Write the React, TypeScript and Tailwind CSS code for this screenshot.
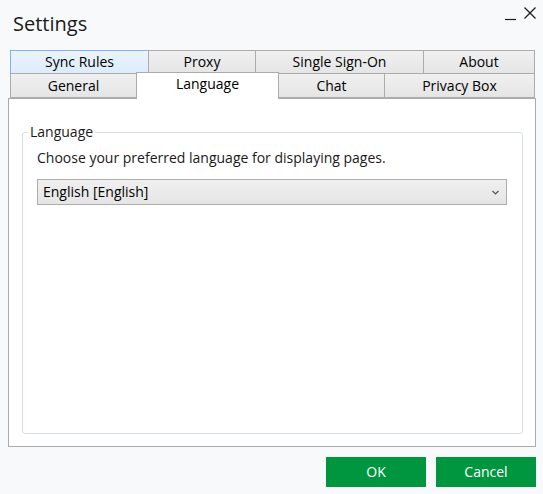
import React from "react";

const tabBase =
  "flex items-center justify-center border border-[#acacac] bg-linear-to-b from-[#f0f0f0] to-[#e5e5e5] text-[14px] leading-[20px] text-[#000]";

export default function App() {
  return (
    <div className="w-[543px] h-[494px] bg-[#f8f9fb] font-['Open_Sans','Noto_Sans',sans-serif] text-[#000] flex flex-col">
      {/* Title bar */}
      <div className="h-[50px] flex justify-between items-start">
        <div className="pl-[13px] pt-[10px] text-[20px] leading-[28px] text-[#1a1a1a]">Settings</div>
        <svg width="40" height="30" viewBox="0 0 40 30" className="mr-[3px]">
          <line x1="5" y1="19.5" x2="16" y2="19.5" stroke="#1e1e1e" strokeWidth="1.2" />
          <line x1="24.5" y1="7.5" x2="35.5" y2="18.5" stroke="#1e1e1e" strokeWidth="1.3" />
          <line x1="35.5" y1="7.5" x2="24.5" y2="18.5" stroke="#1e1e1e" strokeWidth="1.3" />
        </svg>
      </div>

      {/* Tab row 1 */}
      <div className="flex ml-[10px]">
        <div className="flex items-center justify-center border border-[#7eb4ea] bg-linear-to-b from-[#ecf4fc] to-[#dcecfc] text-[14px] leading-[20px] w-[139px] h-[24px]">
          Sync Rules
        </div>
        <div className={`${tabBase} -ml-px w-[108px] h-[24px]`}>Proxy</div>
        <div className={`${tabBase} -ml-px w-[169px] h-[24px]`}>Single Sign-On</div>
        <div className={`${tabBase} -ml-px w-[112px] h-[24px]`}>About</div>
      </div>

      {/* Tab row 2 */}
      <div className="flex items-start ml-[10px] -mt-px relative z-10">
        <div className={`${tabBase} w-[127px] h-[25px]`}>General</div>
        <div className="-ml-px -mt-px w-[143px] h-[27px] flex items-start justify-center pt-[1px] border border-b-0 border-[#acacac] bg-white text-[14px] leading-[20px]">
          Language
        </div>
        <div className={`${tabBase} -ml-px w-[107px] h-[25px]`}>Chat</div>
        <div className={`${tabBase} -ml-px w-[151px] h-[25px]`}>Privacy Box</div>
      </div>

      {/* Panel */}
      <div className="ml-[8px] w-[528px] h-[349px] -mt-px border border-[#acacac] bg-white flex flex-col pl-[13px] pr-[12px] pt-[23px] pb-[12px]">
        <fieldset className="flex-1 border border-[#d5dfe5] rounded-[3px] px-0">
          <legend className="ml-[5px] px-[2px] text-[14px] leading-[20px] text-[#1a1a1a]">Language</legend>
          <div className="pl-[14px] pr-[15px] pt-[6px]">
            <div className="text-[14px] leading-[20px] text-[#1a1a1a]">
              Choose your preferred language for displaying pages.
            </div>
            <div className="mt-[11px] h-[26px] border border-[#acacac] bg-linear-to-b from-[#f0f0f0] to-[#e5e5e5] flex items-center justify-between pl-[5px] pr-[6px] text-[14px] leading-[20px]">
              <span>English [English]</span>
              <svg width="7" height="5" viewBox="0 0 7 5" className="mr-[1px]">
                <path d="M0.5 1 L3.5 4 L6.5 1" fill="none" stroke="#555" strokeWidth="1.2" />
              </svg>
            </div>
          </div>
        </fieldset>
      </div>

      {/* Buttons */}
      <div className="flex justify-end gap-[10px] mt-[10px] mr-[7px]">
        <button className="w-[100px] h-[30px] bg-[#00963f] text-white text-[14px] leading-[20px]">OK</button>
        <button className="w-[100px] h-[30px] bg-[#00963f] text-white text-[14px] leading-[20px]">Cancel</button>
      </div>
    </div>
  );
}
